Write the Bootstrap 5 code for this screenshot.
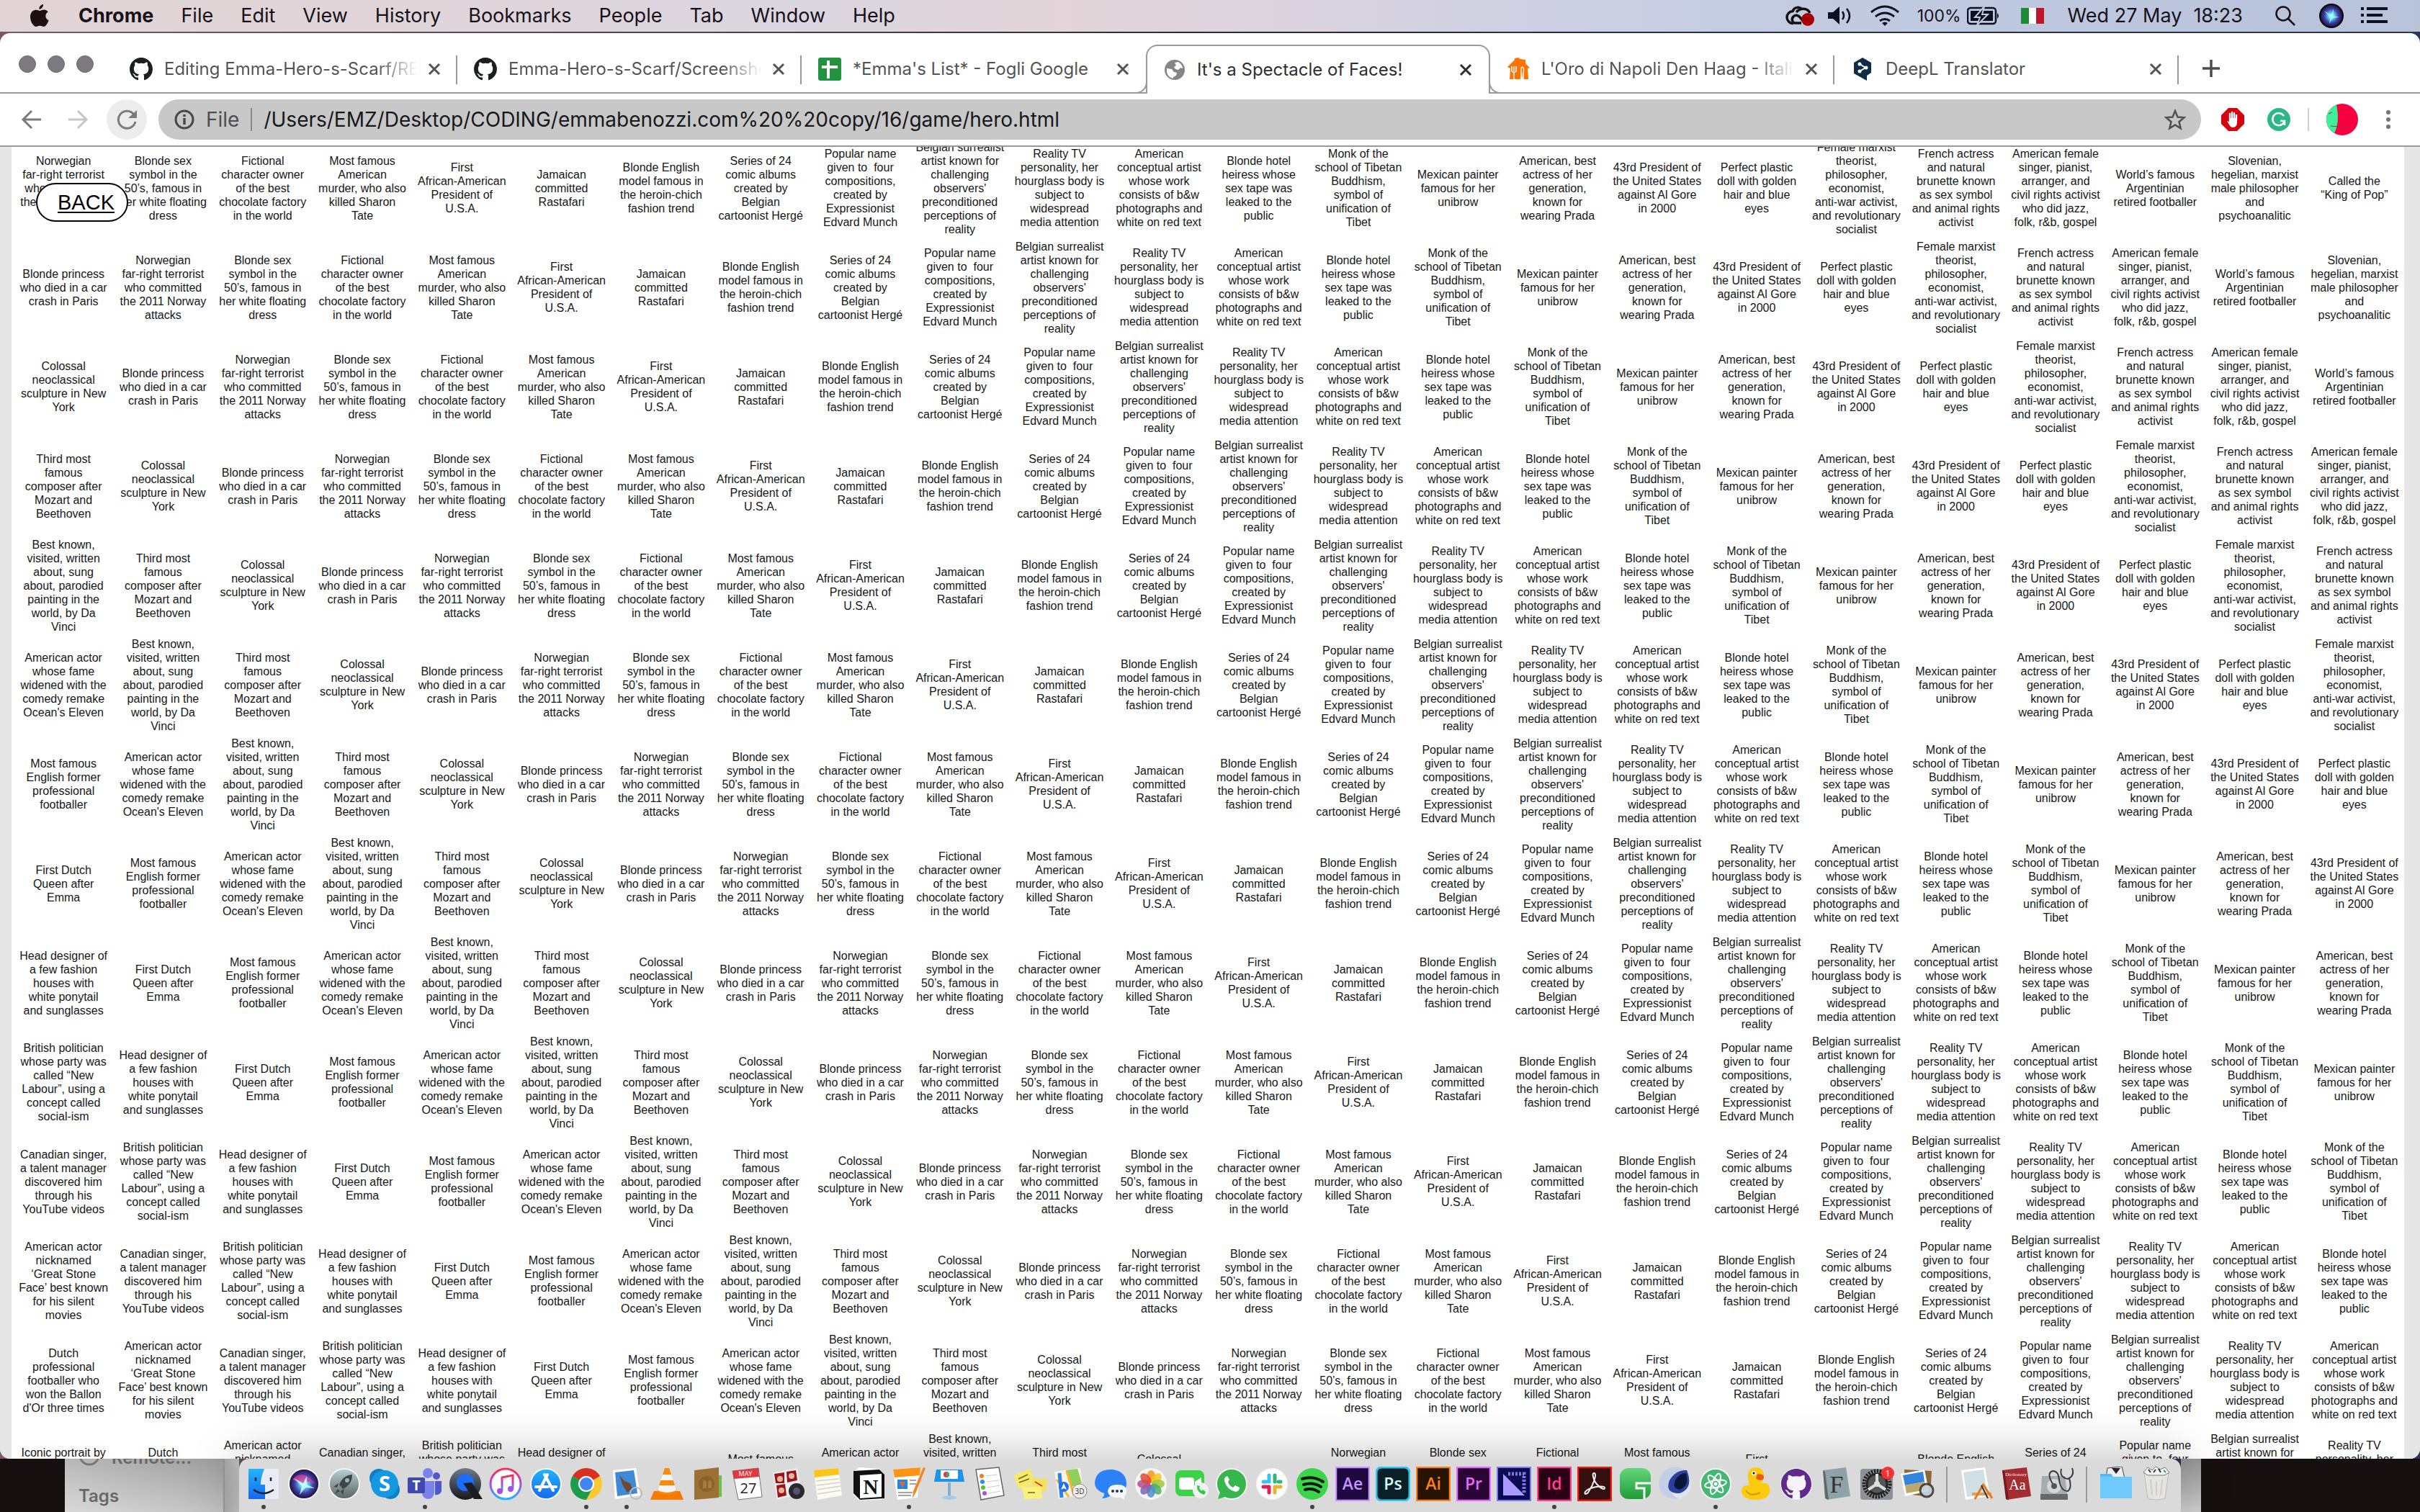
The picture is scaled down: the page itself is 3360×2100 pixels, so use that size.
<!DOCTYPE html>
<html lang="en">
<head>
<meta charset="utf-8">
<meta name="viewport" content="width=device-width, initial-scale=1">
<title>It's a Spectacle of Faces!</title>
<link href="https://cdn.jsdelivr.net/npm/bootstrap@5.3.0/dist/css/bootstrap.min.css" rel="stylesheet">
<style>
body{height:100vh;font-family:Inter,"Liberation Sans",sans-serif;background:linear-gradient(90deg,#7b5a5f,#453c4a 35%,#262a42 50%,#2a3654);color:#17121a}
svg{display:block;flex:none}
button{background:none;border:0;padding:0;color:inherit;font:inherit}
.menubar{height:44px;padding:0 44px 0 42px;font-size:27px;line-height:44px;background:linear-gradient(90deg,#e2d4d6 0,#e0d5da 20%,#dbd6e0 33%,#e3d5d9 44%,#d9d3e0 55%,#cbcfe2 66%,#bfc9df 80%,#b8c3d9)}
.menubar a{color:inherit;text-decoration:none;white-space:nowrap}
.menus{gap:38px;margin-left:41px}
.app-name{font-weight:700}
.percent{font-size:23px}
.clock{margin-left:20px}
.search{margin-left:44px}
.siri{margin:0 24px 0 32px}
.browser{margin-top:2px;background:#fff;border-radius:14px;overflow:hidden;min-height:0}
.tabstrip{height:84px;border-bottom:2px solid #999}
.lights{width:157px;gap:16px;padding:4px 0 0 26px}
.lights button{width:24px;height:24px;border-radius:50%;background:#7d7b81;border:1px solid #6a686d}
.tab{position:relative;flex:0 1 478px;min-width:0;height:68px;margin-bottom:-2px;padding:0 23px;font-size:24px;color:#545454}
.tab .ttl{margin:0 14px 0 16px;white-space:nowrap;overflow:hidden;color:inherit;text-decoration:none}
.fade-end{-webkit-mask-image:linear-gradient(90deg,#000 84%,transparent);mask-image:linear-gradient(90deg,#000 84%,transparent)}
.tab.sep::after{content:"";position:absolute;right:0;top:15px;height:40px;width:2px;background:#999}
.tab.now{background:#fff;border:2px solid #999;border-bottom:0;border-radius:16px 16px 0 0;color:#2e2e2e}
.tab.now::before,.tab.now .foot{content:"";position:absolute;bottom:0;width:16px;height:16px;border-bottom:2px solid #999;background:#fff}
.tab.now::before{left:-16px;border-right:2px solid #999;border-bottom-right-radius:16px}
.tab.now .foot{right:-16px;border-left:2px solid #999;border-bottom-left-radius:16px}
.new-tab{margin-left:32px}
.toolbar{height:74px;padding:0 34px 0 28px;border-bottom:2px solid #999}
.reload{width:56px;height:56px;border-radius:50%;background:#ececec}
.omni{height:56px;border-radius:28px;background:#c8c8c8;padding:0 20px 0 22px;margin:0 28px 0 16px;font-size:28px}
.omni input{background:none;border:0;outline:0;color:#17181b;padding:0;min-width:0}
.omni label{color:#4e4e4e}
.rule{width:2px;height:32px;background:#888}
.rule.pale{background:#d0d0d0}
.viewport-area{background:#e6e6e6;padding:0 22px 0 16px;font-family:"Liberation Sans",Arial,sans-serif}
.scarf{display:grid;grid-template-columns:repeat(24,minmax(0,1fr));grid-auto-rows:138px;margin-top:-12px;padding-left:3px;background:#fff;font-size:16px;line-height:19px;color:#161616}
.scarf div{display:flex;align-items:center;justify-content:center;text-align:center;white-space:pre}
.back{position:absolute;left:50px;top:50px;padding:0 17px 0 28px;line-height:50px;border:2px solid #000;border-radius:27px;background:#fff;color:#000;font-size:29px;text-underline-offset:3px}
.desk-foot{height:74px}
.wall{background:#15100f}
.wall-left{width:90px}
.wall-right{width:304px}
.gap-left{width:20px;background:linear-gradient(90deg,#aaa,#c4c4c4)}
.gap-right{width:28px;background:linear-gradient(#969696,#d0d0d0)}
.finder-side{width:222px;background:linear-gradient(90deg,rgba(255,255,255,.2),rgba(90,90,90,.12)),linear-gradient(#a6a6a6,#cfcfcf);border-right:2px solid #999;color:#686868;font-size:24px;font-weight:600;padding:0 19px}
.peek{height:10px}
.peek span{line-height:20px;margin-top:-11px}
.dock{position:relative;z-index:2;gap:8px;padding:11px 10px 0;background:#dadada;border-radius:14px 14px 0 0;box-shadow:0 0 70px rgba(0,0,0,.28)}
.dock button{position:relative;width:48px;height:63px}
.dock .running::after{content:"";position:absolute;left:21px;bottom:4px;width:6px;height:6px;border-radius:50%;background:#444}
.dock .split{width:18px;height:50px;background:linear-gradient(#999,#999) center/2px 100% no-repeat}
.dock text{font-family:"Open Sans",sans-serif;text-anchor:middle}
</style>
<script src="https://cdn.jsdelivr.net/npm/bootstrap@5.3.0/dist/js/bootstrap.bundle.min.js"></script>
</head>
<body class="d-flex flex-column overflow-hidden">
<svg width="0" height="0" class="position-absolute" aria-hidden="true"><defs>
<symbol id="octo" viewBox="0 0 16 16"><path fill="currentColor" d="M8 0C3.58 0 0 3.58 0 8c0 3.54 2.29 6.53 5.47 7.59.4.07.55-.17.55-.38 0-.19-.01-.82-.01-1.49-2.01.37-2.53-.49-2.69-.94-.09-.23-.48-.94-.82-1.13-.28-.15-.68-.52-.01-.53.63-.01 1.08.58 1.23.82.72 1.21 1.87.87 2.33.66.07-.52.28-.87.51-1.07-1.78-.2-3.64-.89-3.64-3.95 0-.87.31-1.59.82-2.15-.08-.2-.36-1.02.08-2.12 0 0 .67-.21 2.2.82.64-.18 1.32-.27 2-.27s1.36.09 2 .27c1.53-1.04 2.2-.82 2.2-.82.44 1.1.16 1.92.08 2.12.51.56.82 1.27.82 2.15 0 3.07-1.87 3.75-3.65 3.95.29.25.54.73.54 1.48 0 1.07-.01 1.93-.01 2.2 0 .21.15.46.55.38A8.01 8.01 0 0 0 16 8c0-4.42-3.58-8-8-8z"/></symbol>
<symbol id="cross" viewBox="0 0 18 18"><path d="M2 2l14 14M16 2L2 16" stroke="currentColor" stroke-width="3" fill="none"/></symbol>
<radialGradient id="siriG"><stop offset="0" stop-color="#fff"/><stop offset=".25" stop-color="#5fd8f2"/><stop offset=".6" stop-color="#4440a8"/><stop offset="1" stop-color="#150f2e"/></radialGradient>
<linearGradient id="blueG" x2="0" y2="1"><stop stop-color="#23b5fb"/><stop offset="1" stop-color="#1567f2"/></linearGradient>
<linearGradient id="greyG" x2="0" y2="1"><stop stop-color="#b9d0d2"/><stop offset="1" stop-color="#5a6464"/></linearGradient>
<linearGradient id="qG" x2="0" y2="1"><stop stop-color="#6d7b8c"/><stop offset="1" stop-color="#16181d"/></linearGradient>
<linearGradient id="itG" x2="0" y2="1"><stop stop-color="#fb2d56"/><stop offset=".5" stop-color="#b04be0"/><stop offset="1" stop-color="#20b8fa"/></linearGradient>
<linearGradient id="greenG" x2="0" y2="1"><stop stop-color="#63d67a"/><stop offset="1" stop-color="#1f9c38"/></linearGradient>
</defs></svg>

<nav class="menubar d-flex align-items-center flex-shrink-0" aria-label="Menu bar">
 <svg width="26" height="32" viewBox="0 0 26 32" fill="#1d0f12"><path d="M18 0c.4 3.600-2.700 6.900-5.600 6.700C12 3.400 15 .4 18 0zM13 9c1.500 0 3-1.500 6-1.500 2.300 0 4.400 1.200 5.700 3.100-5 3-4.100 9.700.9 11.600C24.100 26.500 21.400 31 18.600 31c-2 0-2.700-1.200-5.200-1.200S10 31 8.100 31C4.500 31 0 24.100 0 17.500 0 11.300 3.900 7.800 7.700 7.800 10.200 7.800 12 9 13 9z"/></svg>
 <div class="menus d-flex">
  <a href="#" class="app-name">Chrome</a><a href="#">File</a><a href="#">Edit</a><a href="#">View</a><a href="#">History</a><a href="#">Bookmarks</a><a href="#">People</a><a href="#">Tab</a><a href="#">Window</a><a href="#">Help</a>
 </div>
 <div class="d-flex align-items-center ms-auto">
  <svg width="42" height="30" viewBox="0 0 42 30"><path d="M12 25.500a8.500 8.500 0 0 1-1-17c2-5 8-7 13-3M16 10c5-6 15-7 19 1" fill="none" stroke="#111" stroke-width="3.500"/><path d="M23 25h-9c-4-1-5-6-2-9s7-2 9 1l7 8" fill="none" stroke="#111" stroke-width="3.500"/><circle cx="32" cy="20" r="9" fill="#a80000"/></svg>
  <svg class="ms-3" width="36" height="28" viewBox="0 0 36 28"><path d="M2 9h7l9-8v25l-9-8H2z" fill="#0d1020"/><path d="M22 8q4 6 0 11M28 4q8 10 0 20" fill="none" stroke="#0d1020" stroke-width="2.500"/></svg>
  <svg class="mx-4" width="42" height="30" viewBox="0 0 42 30"><path d="M2 10q19-16 38 0M8 16q13-10 26 0M14 22q7-5 14 0" fill="none" stroke="#0d1020" stroke-width="3"/><path d="M17 25q4-3 8 0l-4 4z" fill="#0d1020"/></svg>
  <span class="percent">100%</span>
  <svg class="ms-2" width="46" height="26" viewBox="0 0 46 26"><rect x="1" y="2" width="39" height="22" rx="4" fill="none" stroke="#0d1020" stroke-width="2.500"/><rect x="5" y="6" width="31" height="14" fill="#0d1020"/><path d="M42 9q4 4 0 8z" fill="#0d1020"/><path d="M24 0L11 15h7l-4 11 15-15h-8z" fill="#0d1020" stroke="#c3cbe0" stroke-width="2"/></svg>
  <svg class="ms-4 me-2" width="42" height="22" viewBox="0 0 42 22"><path fill="#1e8a35" d="M5 0h11v22H5z"/><path fill="#fff" d="M16 0h10v22H16z"/><path fill="#c0142a" d="M26 0h11v22H26z"/></svg>
  <span class="clock">Wed 27 May</span><span class="ms-3">18:23</span>
  <svg class="search" width="30" height="30" viewBox="0 0 30 30" fill="none" stroke="#17121a" stroke-width="2.500"><circle cx="12" cy="12" r="9.500"/><path d="M19 19l9 9"/></svg>
  <svg class="siri" width="34" height="34" viewBox="0 0 34 34"><circle cx="17" cy="17" r="16" fill="url(#siriG)" stroke="#080812" stroke-width="2"/><path d="M7 10l10 6 3-9 0 10 8 2-9 1-5 8 1-9z" fill="#9ff" opacity=".7"/></svg>
  <svg width="38" height="24" viewBox="0 0 38 24" stroke="#0d1020" stroke-width="4"><path d="M0 2h4M8 2h29M0 11h4M8 11h22M0 20h4M8 20h29"/></svg>
 </div>
</nav>

<main class="browser d-flex flex-column flex-grow-1">
 <div class="tabstrip d-flex flex-shrink-0 align-items-end">
  <div class="lights d-flex align-items-center align-self-center flex-shrink-0"><button aria-label="Close window"></button><button aria-label="Minimise"></button><button aria-label="Zoom"></button></div>
  <div class="tab sep d-flex align-items-center"><svg width="32" height="32" color="#1b1f23"><use href="#octo"/></svg><a href="#" class="ttl flex-grow-1 fade-end">Editing Emma-Hero-s-Scarf/README.md</a><button aria-label="Close tab"><svg width="18" height="18"><use href="#cross"/></svg></button></div>
  <div class="tab sep d-flex align-items-center"><svg width="32" height="32" color="#1b1f23"><use href="#octo"/></svg><a href="#" class="ttl flex-grow-1 fade-end">Emma-Hero-s-Scarf/Screenshots</a><button aria-label="Close tab"><svg width="18" height="18"><use href="#cross"/></svg></button></div>
  <div class="tab d-flex align-items-center"><svg width="32" height="32" viewBox="0 0 32 32"><rect width="32" height="32" rx="3" fill="#23923f"/><path d="M5 13h22M14 4v25" stroke="#fff" stroke-width="4"/></svg><a href="#" class="ttl flex-grow-1">*Emma's List* - Fogli Google</a><button aria-label="Close tab"><svg width="18" height="18"><use href="#cross"/></svg></button></div>
  <div class="tab now d-flex align-items-center"><svg width="30" height="30" viewBox="0 0 30 30"><circle cx="15" cy="15" r="14" fill="#858585"/><path d="M15 5l5-1q6 4 6 9l-3-1-3 3-4-1-2-3 3-2zM4 13l7 1 3 4 4 1-1 4-4 2v2q-8-2-9-9z" fill="#fff"/></svg><a href="#" class="ttl flex-grow-1">It's a Spectacle of Faces!</a><button aria-label="Close tab"><svg width="18" height="18"><use href="#cross"/></svg></button><span class="foot"></span></div>
  <div class="tab sep d-flex align-items-center"><svg width="32" height="32" viewBox="0 0 32 32"><path d="M1 13L11 3V1l5-1 3 2 7 1v5l6 6-3 1 1 15h-8l-1-9-2 9H4L5 15z" fill="#ff7400"/><path d="M10 12v7M13 12v7M7 12v7q3 3 6 0M10 20v11M20 31V14q5-3 3 8v9" stroke="#fff" stroke-width="1.500" fill="none"/></svg><a href="#" class="ttl flex-grow-1 fade-end">L'Oro di Napoli Den Haag - Italiaans</a><button aria-label="Close tab"><svg width="18" height="18"><use href="#cross"/></svg></button></div>
  <div class="tab sep d-flex align-items-center"><svg width="32" height="32" viewBox="0 0 32 32"><path d="M16 0l12 7v14l-6 4v7L4 22V7z" fill="#0f2b46"/><path d="M12 9l8 5-8 5" stroke="#fff" stroke-width="2" fill="none"/><circle cx="12" cy="9" r="2.500" fill="#fff"/><circle cx="21" cy="14" r="2.500" fill="#fff"/><circle cx="12" cy="19" r="2.500" fill="#fff"/></svg><a href="#" class="ttl flex-grow-1">DeepL Translator</a><button aria-label="Close tab"><svg width="18" height="18"><use href="#cross"/></svg></button></div>
  <button class="new-tab align-self-end mb-3 pb-1" aria-label="New tab"><svg width="26" height="26" viewBox="0 0 26 26"><path d="M13 1v24M1 13h24" stroke="#4d4d4d" stroke-width="3.500"/></svg></button>
 </div>

 <div class="toolbar d-flex align-items-center flex-shrink-0">
  <button aria-label="Back"><svg width="32" height="32" viewBox="0 0 32 32" fill="none" stroke="#7b7b7b" stroke-width="3"><path d="M29 16H5M16 4L4 16l12 12"/></svg></button>
  <button class="ms-4 me-3 px-2" aria-label="Forward"><svg width="32" height="32" viewBox="0 0 32 32" fill="none" stroke="#c6c6c6" stroke-width="3"><path d="M3 16h24M16 4l12 12-12 12"/></svg></button>
  <button class="reload d-flex align-items-center justify-content-center flex-shrink-0 ms-n1" aria-label="Reload"><svg width="30" height="30" viewBox="0 0 30 30"><path d="M25 8A12 12 0 1 0 27 18" fill="none" stroke="#7b7b7b" stroke-width="3"/><path d="M29 2v11H17z" fill="#7b7b7b"/></svg></button>
  <form class="omni d-flex align-items-center flex-grow-1" onsubmit="return false">
   <svg width="28" height="28" viewBox="0 0 28 28"><circle cx="14" cy="14" r="12" fill="none" stroke="#484848" stroke-width="3"/><path d="M14 7v3M14 12v9" stroke="#484848" stroke-width="3.500"/></svg>
   <label for="addr" class="ms-3 me-3">File</label><span class="rule"></span>
   <input id="addr" class="flex-grow-1 ms-3" value="/Users/EMZ/Desktop/CODING/emmabenozzi.com%20%20copy/16/game/hero.html">
   <button type="button" aria-label="Bookmark this page"><svg width="32" height="32" viewBox="0 0 32 32"><path d="M16 4l3.500 8.500 9 .8-7 6 2.200 9L16 23.500 8.300 28.300l2.200-9-7-6 9-.8z" fill="none" stroke="#505050" stroke-width="2.500"/></svg></button>
  </form>
  <button aria-label="Blocker"><svg width="32" height="32" viewBox="0 0 32 32"><path d="M10 0h12l10 10v12L22 32H10L0 22V10z" fill="#d4040e"/><path d="M12 17V8M15 16V6M18 16V7M21 17v-7" stroke="#fff" stroke-width="2.400" stroke-linecap="round"/><path d="M11 14h11v6q0 7-6 7-3 0-5-4l-3-5 3 1z" fill="#fff"/></svg></button>
  <button class="ms-4 ps-2" aria-label="Grammar check"><svg width="32" height="32" viewBox="0 0 32 32"><circle cx="16" cy="16" r="16" fill="#2bb885"/><path d="M23 11a8.500 8.500 0 1 0 1 7h-6M24 18v6" fill="none" stroke="#fff" stroke-width="2.500"/></svg></button>
  <span class="rule pale ms-4"></span>
  <button class="ms-4" aria-label="Profile"><svg width="44" height="44" viewBox="0 0 44 44"><circle cx="22" cy="22" r="22" fill="#f8003f"/><path d="M14 1.500Q0 8 0 22q0 12 11 19 8-15 3-39.500z" fill="#3df09b"/><path d="M6 31l26 2M3 14l5-2" stroke="#933" stroke-width="1" fill="none"/></svg></button>
  <button class="ms-4 ps-2" aria-label="More"><svg width="20" height="28" viewBox="0 0 20 28" fill="#757575"><circle cx="10" cy="4" r="3"/><circle cx="10" cy="14" r="3"/><circle cx="10" cy="24" r="3"/></svg></button>
 </div>

 <section class="viewport-area position-relative flex-grow-1 overflow-hidden">
  <div class="scarf" id="scarf"></div>
  <a class="back" href="#">BACK</a>
 </section>
</main>

<footer class="desk-foot d-flex flex-shrink-0">
 <div class="wall wall-left"></div>
 <div class="finder-side d-flex flex-column">
  <div class="peek d-flex overflow-hidden"><svg width="30" height="10" viewBox="0 20 30 10"><circle cx="15" cy="15" r="13" fill="none" stroke="#777" stroke-width="3"/></svg><span class="ms-3">Remote...</span></div>
  <div class="mt-auto mb-1">Tags</div>
 </div>
 <div class="gap-left"></div>
 <div class="dock d-flex flex-grow-1 justify-content-between" id="dock"></div>
 <div class="gap-right"></div>
 <div class="wall wall-right"></div>
</footer>

<script>
// Oldest clue first: each row of the scarf starts one clue earlier than the row above.
const clues = [
"Iconic portrait by\n\n\n\n ",
"Dutch\nprofessional\nfootballer who\nwon the Ballon\nd'Or three times",
"American actor\nnicknamed\n‘Great Stone\nFace’ best known\nfor his silent\nmovies",
"Canadian singer,\na talent manager\ndiscovered him\nthrough his\nYouTube videos",
"British politician\nwhose party was\ncalled “New\nLabour”, using a\nconcept called\nsocial-ism",
"Head designer of\na few fashion\nhouses with\nwhite ponytail\nand sunglasses",
"First Dutch\nQueen after\nEmma",
"Most famous\nEnglish former\nprofessional\nfootballer",
"American actor\nwhose fame\nwidened with the\ncomedy remake\nOcean's Eleven",
"Best known,\nvisited, written\nabout, sung\nabout, parodied\npainting in the\nworld, by Da\nVinci",
"Third most\nfamous\ncomposer after\nMozart and\nBeethoven",
"Colossal\nneoclassical\nsculpture in New\nYork",
"Blonde princess\nwho died in a car\ncrash in Paris",
"Norwegian\nfar-right terrorist\nwho committed\nthe 2011 Norway\nattacks",
"Blonde sex\nsymbol in the\n50’s, famous in\nher white floating\ndress",
"Fictional\ncharacter owner\nof the best\nchocolate factory\nin the world",
"Most famous\nAmerican\nmurder, who also\nkilled Sharon\nTate",
"First\nAfrican-American\nPresident of\nU.S.A.",
"Jamaican\ncommitted\nRastafari",
"Blonde English\nmodel famous in\nthe heroin-chich\nfashion trend",
"Series of 24\ncomic albums\ncreated by\nBelgian\ncartoonist Hergé",
"Popular name\ngiven to  four\ncompositions,\ncreated by\nExpressionist\nEdvard Munch",
"Belgian surrealist\nartist known for\nchallenging\nobservers'\npreconditioned\nperceptions of\nreality",
"Reality TV\npersonality, her\nhourglass body is\nsubject to\nwidespread\nmedia attention",
"American\nconceptual artist\nwhose work\nconsists of b&w\nphotographs and\nwhite on red text",
"Blonde hotel\nheiress whose\nsex tape was\nleaked to the\npublic",
"Monk of the\nschool of Tibetan\nBuddhism,\nsymbol of\nunification of\nTibet",
"Mexican painter\nfamous for her\nunibrow",
"American, best\nactress of her\ngeneration,\nknown for\nwearing Prada",
"43rd President of\nthe United States\nagainst Al Gore\nin 2000",
"Perfect plastic\ndoll with golden\nhair and blue\neyes",
"Female marxist\ntheorist,\nphilosopher,\neconomist,\nanti-war activist,\nand revolutionary\nsocialist",
"French actress\nand natural\nbrunette known\nas sex symbol\nand animal rights\nactivist",
"American female\nsinger, pianist,\narranger, and\ncivil rights activist\nwho did jazz,\nfolk, r&b, gospel",
"World’s famous\nArgentinian\nretired footballer",
"Slovenian,\nhegelian, marxist\nmale philosopher\nand\npsychoanalitic",
"Called the\n“King of Pop”"];
const scarf = document.getElementById('scarf');
for (let row = 0; row < 14; row++)
  for (let col = 0; col < 24; col++) {
    const cell = document.createElement('div');
    cell.textContent = clues[13 - row + col];
    scarf.append(cell);
  }

const adobe = (t, line, bg) => `<rect x="1" y="1" width="46" height="46" fill="${bg}" stroke="${line}" stroke-width="2.500"/><text x="24" y="32" font-size="23" font-weight="600" fill="${line}">${t}</text>`;
const disc = (fill, inner) => `<circle cx="24" cy="24" r="21" fill="${fill}" stroke="#f5f5f5" stroke-width="2"/>${inner}`;
const petals = ['#f7941d','#f2c51c','#9fc63b','#4fae62','#4a90d0','#7a65b0','#b0508e','#e0483e'].map((c,i)=>`<ellipse cx="24" cy="14" rx="6" ry="9" fill="${c}" opacity=".85" transform="rotate(${i*45} 24 24)"/>`).join('');
const apps = [
["Finder",`<rect x="3" y="3" width="42" height="42" rx="2" fill="#e9edf3"/><path d="M3 3h22q-5 12-5 22h6v20H3z" fill="url(#blueG)"/><path d="M13 15v5M34 15v5M10 32q14 10 28 0" stroke="#12243c" stroke-width="2.500" fill="none"/>`,1],
["Siri",disc('url(#siriG)','<path d="M8 18q14-16 32 6-12-6-16 0z" fill="#e03a94" opacity=".75"/><path d="M10 16l13 7 5-10v12l11 5-13-1-8 10 3-12z" fill="#c8ffff" opacity=".85"/>')],
["Launchpad",disc('url(#greyG)','<path d="M35 11q-13 1-18 14l5 6q13-6 13-20zM16 23l-7 5 5 1zM24 31l-2 8-3-5zM15 31l-4 7 7-4z" fill="#3e4547"/><circle cx="28" cy="19" r="3" fill="#9fb1b3"/>')],
["Skype",`<circle cx="16" cy="16" r="13" fill="#0b7fc8"/><circle cx="32" cy="32" r="13" fill="#0b7fc8"/><circle cx="24" cy="24" r="19" fill="#1598df"/><text x="24" y="34" font-size="29" font-weight="700" fill="#fff">S</text>`],
["Teams",`<circle cx="28" cy="9" r="7" fill="#7b83eb"/><circle cx="40" cy="13" r="5" fill="#5059c9"/><path d="M20 20h17v16q-1 9-9 9-8-1-8-9z" fill="#7b83eb"/><path d="M38 20h9v14q-2 6-9 5z" fill="#5059c9"/><rect y="15" width="24" height="22" rx="2" fill="#4049ac"/><text x="12" y="33" font-size="19" font-weight="700" fill="#fff">T</text>`,1],
["QuickTime",`<circle cx="24" cy="24" r="22" fill="url(#qG)"/><circle cx="24" cy="22" r="12" fill="#1c6dfa"/><path d="M21 23l12-1 15 23H36z" fill="#1b1d22"/>`],
["Music",`<circle cx="24" cy="24" r="21" fill="#fff" stroke="url(#itG)" stroke-width="3"/><path d="M19 34V15l15-3v18" fill="none" stroke="url(#itG)" stroke-width="3"/><circle cx="16" cy="34" r="4" fill="#b04be0"/><circle cx="31" cy="31" r="4" fill="#a44fe6"/>`],
["App Store",disc('url(#blueG)','<path d="M26 11L15 33M22 11l12 22M10 28h17M32 28h6" stroke="#fff" stroke-width="4" stroke-linecap="round"/>')],
["Chrome",`<circle cx="24" cy="24" r="22" fill="#fcc934"/><path d="M24 24L5 13A22 22 0 0 1 43 13z" fill="#d93025"/><path d="M5 13A22 22 0 0 0 24 46l9-17-9-5z" fill="#1e9b4f"/><circle cx="24" cy="24" r="11" fill="#fff"/><circle cx="24" cy="24" r="9" fill="#4185f3"/>`,1],
["Mail",`<path d="M5 5l32-3 6 38-35 5z" fill="#fff"/><path d="M8 8l26-3 5 32-28 4z" fill="#3f8ad6"/><path d="M14 12l7 8 8 3 3 8-7 5-6-9z" fill="#6c4a2b"/><circle cx="37" cy="37" r="8" fill="none" stroke="#bbb" stroke-width="2"/>`,1],
["VLC",`<path d="M6 34h36l5 12H1z" fill="#f47b00"/><path d="M21 2h6l11 33q-14 7-28 0z" fill="#f68a0c"/><path d="M18 11h12l3 8H15zM13 26h22l2 7q-13 6-26 0z" fill="#f4f4f4"/>`],
["Contacts",`<path d="M6 5l34-4v42L6 46z" fill="#9b7136"/><path d="M40 12h4v30h-4z" fill="#6cbf4b"/><circle cx="23" cy="24" r="11" fill="#8a622c"/><path d="M18 30v-9q2-4 5 0v9M25 30v-9q2-4 5 0v9" fill="#a57c42"/>`],
["Calendar",`<path d="M3 6l36-4 5 40-33 4z" fill="#fff" stroke="#777"/><path d="M3 6l36-4 1 12-35 3z" fill="#e0383e"/><text x="21" y="13" font-size="9" fill="#fff">MAY</text><text x="25" y="37" font-size="20" fill="#222">27</text>`],
["Photo Booth",`<path d="M3 8l34-6 6 36-34 8z" fill="#eee"/><path d="M5 10l14-2v15H7zM22 7l13-2 2 14-14 3zM8 26l12-2 2 16-12 3z" fill="#9a1420"/><circle cx="13" cy="17" r="4" fill="#e8b59a"/><circle cx="29" cy="13" r="4" fill="#e8b59a"/><circle cx="15" cy="33" r="4" fill="#e8b59a"/><circle cx="36" cy="34" r="11" fill="#2a2a2c"/><circle cx="36" cy="34" r="5" fill="#5a5076"/>`],
["Notes",`<path d="M4 5l34-3 5 38-34 6z" fill="#fbfaf3"/><path d="M4 5l34-3 1 9-34 4z" fill="#fdc617"/><path d="M7 20l32-3M8 26l32-4M9 32l32-5M9 38l32-5" stroke="#d5d2c5" stroke-width="1.500"/>`],
["Notion",`<path d="M3 6l8-5 28 2 7 8v32l-5 3-30 1-8-8z" fill="#fff"/><path d="M3 6l36-2 7 7v33l-34 2-9-9z" fill="#111"/><path d="M12 12l30-2v32l-30 2z" fill="#fff"/><text x="27" y="38" font-size="29" font-weight="700" style="font-family:'Liberation Serif',serif" fill="#111">N</text>`],
["Pages",`<path d="M2 4l38-3-4 42-28 3z" fill="#fff"/><path d="M2 4l38-3-1 11L4 15z" fill="#ff9414"/><path d="M8 18h14v13H8z" fill="#2384ea"/><path d="M11 21h8l-4 8z" fill="#f26322"/><path d="M25 19h9M25 24h9M9 36h20M9 40h18" stroke="#888" stroke-width="1.500"/><path d="M44 1l3 1-13 33-5 9 1-10z" fill="#ef8623"/>`,1],
["Keynote",`<path d="M6 4h36l3 17H3z" fill="#1e93ea"/><path d="M12 5h24v12H12z" fill="#fff"/><path d="M22 22h4v20h-4z" fill="#7db0d6"/><ellipse cx="24" cy="43" rx="10" ry="3" fill="#a8c9df"/><circle cx="20" cy="11" r="4" fill="#e34"/><path d="M20 7a4 4 0 0 1 0 8z" fill="#3a7"/>`],
["Reminders",`<path d="M5 4l32-3 7 39-32 6z" fill="#fff" stroke="#666" stroke-width="1.500"/><circle cx="13" cy="13" r="3" fill="#f57c1f"/><circle cx="14" cy="21" r="3" fill="#2b8df0"/><circle cx="15" cy="29" r="3" fill="#5cc234"/><circle cx="17" cy="37" r="3" fill="#a552dd"/><path d="M19 13l16-2M20 21l17-2M21 29l17-3M22 37l17-3" stroke="#ccc"/>`],
["Stickies",`<path d="M1 12L24 3l7 20-22 8z" fill="#f8ea68"/><path d="M27 16l21 1-1 17-20-1z" fill="#f5e25b"/><path d="M13 28h26l2 16-25 1z" fill="#fcf07a"/><path d="M8 17l13-6M9 22l14-5M21 36h10" stroke="#6b662a" stroke-width="1.500"/><path d="M31 21l10 6" stroke="#d33" stroke-width="2"/>`],
["Maps",`<path d="M2 7l36-5 5 36-35 7z" fill="#f5f3e7"/><path d="M18 5l16-2 6 20-14 5z" fill="#8ed05b"/><path d="M5 18l17 24M19 6l10 34" stroke="#f6b32b" stroke-width="3"/><path d="M9 9l3 34" stroke="#2f80ed" stroke-width="5"/><circle cx="15" cy="28" r="7" fill="#2170e8"/><path d="M15 23l4 9-4-2-4 2z" fill="#fff"/><circle cx="37" cy="34" r="10" fill="#eee" stroke="#888"/><text x="37" y="38" font-size="10" fill="#333">3D</text>`],
["Messages",`<path d="M24 4c12 0 22 7 22 19S36 40 24 40q-5 4-12 4 4-3 3-7Q2 33 2 22 4 4 24 4z" fill="#2b82f6"/><path d="M33 25q13 0 13 9 0 5-3 7v5l-5-3q-17 1-18-9 1-9 13-9z" fill="#f5f8ff"/><circle cx="27" cy="34" r="2" fill="#235"/><circle cx="33" cy="34" r="2" fill="#235"/><circle cx="39" cy="34" r="2" fill="#235"/>`],
["Photos",disc('#f3f3f1',petals)],
["FaceTime",`<rect x="2" y="5" width="40" height="36" rx="8" fill="#3ad348"/><rect x="7" y="15" width="21" height="17" rx="4" fill="#fff"/><path d="M29 21l9-6v15l-9-5z" fill="#fff"/><circle cx="37" cy="33" r="11" fill="#f2f2f2"/><path d="M32 26q-1 10 10 13l2-4-4-3-2 2-3-4 1-3z" fill="#2ec93e"/>`],
["WhatsApp",disc('#36b64c','<path d="M5 45l4-13 9 9z" fill="#36b64c"/><path d="M18 13q-5 2-4 7 4 13 16 15 5-1 5-6l-6-3-3 3q-5-2-7-8l2-3z" fill="#fff"/>')],
["Slack",disc('#fff','<g stroke-width="5" stroke-linecap="round"><path d="M20 12v9" stroke="#36c5f0"/><path d="M12 21h4" stroke="#36c5f0"/><path d="M28 12v9M36 21h-3" stroke="#2eb67d"/><path d="M28 28v8M28 28h8" stroke="#ecb22e"/><path d="M20 28v8M12 28h8" stroke="#e01e5a"/></g>')],
["Spotify",`<circle cx="24" cy="24" r="22" fill="#3bd54c"/><path d="M10 17q15-5 29 4M12 25q13-4 24 3M14 32q10-3 19 3" fill="none" stroke="#101810" stroke-width="4" stroke-linecap="round"/>`,1],
["After Effects",adobe('Ae','#c993ff','#1f0740')],
["Photoshop",`<rect x="1" y="1" width="46" height="46" rx="7" fill="#0a1f26" stroke="#31c5f0" stroke-width="3"/><text x="24" y="32" font-size="23" font-weight="600" fill="#d5fbff">Ps</text>`],
["Illustrator",adobe('Ai','#ff7f18','#261300')],
["Premiere Pro",adobe('Pr','#e36bff','#2a0634')],
["Media Encoder",`<rect x="1" y="1" width="46" height="46" fill="#0b0b52" stroke="#7d7af0" stroke-width="2"/><path d="M9 10l30 30H9z" fill="#a99bff"/><path d="M16 10h22v26" fill="none" stroke="#7f78d8" stroke-width="5" stroke-dasharray="3 2"/>`],
["InDesign",adobe('Id','#ff3f95','#2c0014'),1],
["Acrobat",`<rect x="1" y="1" width="46" height="46" fill="#33100f" stroke="#fb1b0d" stroke-width="2.500"/><path d="M23 9c5 0 0 15-8 27-4 4-7 1-2-3 7-5 26-8 25-3-1 4-14-5-16-16-1-4 0-5 1-5z" fill="none" stroke="#eee" stroke-width="2"/>`],
["GrandPerspective",`<rect x="3" y="2" width="43" height="43" rx="12" fill="url(#greenG)"/><path d="M46 23H26v7h11v15" fill="none" stroke="#fff" stroke-width="3"/>`],
["Cinema 4D",`<circle cx="24" cy="24" r="22" fill="#dfe5ef"/><path d="M41 7A23 23 0 0 0 8 40q8 6 22 5Q9 38 26 12q8-8 15-5z" fill="#c3cfe6"/><path d="M40 5Q50 30 30 37q-21 0-14-18Q25 4 40 5z" fill="#2b3f9c"/><path d="M39 9Q44 27 30 32q-12-2-5-15 6-8 14-8z" fill="#0b1538"/>`],
["Atom",disc('#45b775','<g fill="none" stroke="#fff" stroke-width="2"><ellipse cx="24" cy="24" rx="5" ry="15" transform="rotate(20 24 24)"/><ellipse cx="24" cy="24" rx="5" ry="15" transform="rotate(80 24 24)"/><ellipse cx="24" cy="24" rx="5" ry="15" transform="rotate(140 24 24)"/></g><circle cx="24" cy="24" r="2.500" fill="#fff"/>'),1],
["Cyberduck",`<path d="M23 1q13 0 12 14-1 6-4 8 14-2 12 12-2 11-19 11Q3 46 4 32q1-7 11-6-7-24 8-25z" fill="#fccb10"/><path d="M26 10q12 0 8 8-7 2-10-2z" fill="#ea5b1a"/><circle cx="21" cy="9" r="3" fill="#fff"/><circle cx="21" cy="9" r="1.500"/><path d="M10 33q6 10 20 3" fill="none" stroke="#d79b05" stroke-width="2"/>`],
["GitHub Desktop",`<circle cx="24" cy="24" r="22" fill="#f5f3f7"/><svg x="3" y="3" width="42" height="42" color="#5e2a8c"><use href="#octo"/></svg>`],
["Font Book",`<path d="M5 5l32-4 6 40-33 5z" fill="#8fa3a6"/><path d="M5 5l3 2 5 39-5-2z" fill="#5d6b6d"/><text x="24" y="36" font-size="34" style="font-family:'Liberation Serif',serif" fill="#333">F</text>`],
["System Preferences",`<rect x="1" y="3" width="45" height="43" rx="4" fill="#8b9196"/><circle cx="24" cy="24" r="18" fill="#9c9c9c" stroke="#222" stroke-width="5" stroke-dasharray="2.500 1.500"/><circle cx="24" cy="24" r="14" fill="#555" stroke="#222" stroke-width="3"/><path d="M24 24V10M24 24l12 8M24 24l-12 8" stroke="#ddd" stroke-width="4"/><circle cx="24" cy="24" r="4" fill="#ddd"/><circle cx="39" cy="9" r="9" fill="#fb2e33"/><text x="39" y="14" font-size="13" fill="#fff">1</text>`],
["Preview",`<path d="M6 4l38 2-2 36-34-4z" fill="#8a6a3c"/><path d="M1 10l33-6 6 30-33 7z" fill="#fff"/><path d="M4 12l28-5 2 14-27 5z" fill="#3185dd"/><path d="M7 26l27-5 3 11-28 5z" fill="#bfa66e"/><circle cx="37" cy="33" r="9" fill="#c5d5de" opacity=".9" stroke="#443b34" stroke-width="3"/>`],
null,
["Applications",`<path d="M3 5l33-4 7 40-34 5z" fill="#fff"/><path d="M6 8l28-4 5 34-28 4z" fill="#cfdfe4"/><path d="M18 36h27v4H18z" fill="#dba159"/><path d="M33 24l13 20M34 24L22 45" stroke="#e8781b" stroke-width="3"/><path d="M31 26l9 18" stroke="#333" stroke-width="2"/>`],
["Dictionary",`<path d="M4 5l34-4 6 40-34 5z" fill="#a32d31"/><path d="M4 5l3 1 6 40-4-1z" fill="#6f1a1e"/><text x="23" y="13" font-size="7" style="font-family:'Liberation Serif',serif" fill="#f6e9e9">Dictionary</text><text x="25" y="32" font-size="20" style="font-family:'Liberation Serif',serif" fill="#fff">Aa</text>`],
["Disk Utility",`<path d="M3 13h32l4 32H1z" fill="#a7acb0"/><path d="M1 38h38v8H1z" fill="#66696c"/><circle cx="20" cy="27" r="10" fill="#d3d7da"/><path d="M20 27Q8 9 18 6q8 0 9 12 2 16 12 16 6-4 2-18M30 3q-3 12 9 14 10-4 6-15" fill="none" stroke="#3c3c3e" stroke-width="2"/><circle cx="20" cy="27" r="4" fill="#555"/>`],
null,
["Downloads",`<path d="M12 2l20-2 4 16H10z" fill="#eee" stroke="#444"/><path d="M18 2l6 8 6-8z" fill="#222"/><path d="M2 10h15l3 4h26v30H2z" fill="#55baf2"/><path d="M2 14h44v30H2z" fill="#6fc9fb"/>`],
["Trash",`<path d="M7 8h34l-5 36q-12 4-24 0z" fill="#e4e4e2" stroke="#bbb"/><path d="M6 8l6-7 6 4 5-5 6 4 7-3 6 7-7 4H12z" fill="#f7f7f7" stroke="#777"/><path d="M13 4l3 4M27 3l3 5M20 8l3-4" stroke="#333" stroke-width="2"/><path d="M34 5l3 3" stroke="#2b9e74" stroke-width="2"/><path d="M16 18l2 22M24 20v20M32 18l-2 22" stroke="#d2cdca" stroke-width="2"/>`]];
document.getElementById('dock').innerHTML = apps.map(a => a
  ? `<button aria-label="${a[0]}"${a[2] ? ' class="running"' : ''}><svg class="position-absolute top-0 start-0" width="48" height="48" viewBox="0 0 48 48">${a[1]}</svg></button>`
  : '<span class="split"></span>').join('');
</script>
</body>
</html>
